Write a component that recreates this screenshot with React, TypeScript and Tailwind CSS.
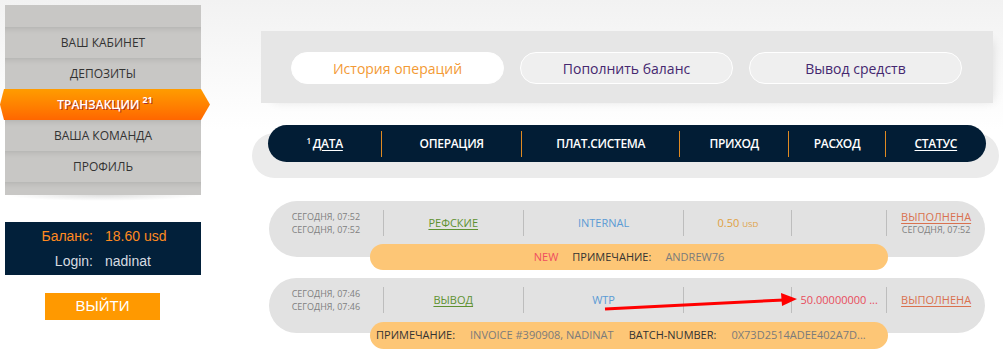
import React from "react";

const menu = [
    { label: "Ваш кабинет" },
    { label: "Депозиты" },
    { label: "Транзакции", active: true, badge: "21" },
    { label: "Ваша команда" },
    { label: "Профиль" },
];

const headCols = [
    { label: "ДАТА", w: "w-[114px]", link: true, sup: "1" },
    { label: "ОПЕРАЦИЯ", w: "w-[140px]" },
    { label: "ПЛАТ.СИСТЕМА", w: "w-[158px]" },
    { label: "ПРИХОД", w: "w-[109px]" },
    { label: "РАСХОД", w: "w-[96px]" },
    { label: "СТАТУС", w: "w-[101px]", link: true },
];

function Divider({ color }: { color: string }) {
    return <div className={`w-px h-[26px] shrink-0 ${color}`} />;
}

function Sidebar() {
    return (
        <div className="w-[210px] shrink-0 flex flex-col pt-[5px] font-['Open_Sans',sans-serif]">
            <div className="ml-[5px] w-[196px] bg-[#c8c7c5] pt-[22px]">
                {menu.map((item) =>
                    item.active ? (
                        <div
                          key={item.label}
                          className="-ml-[5px] w-[210px] h-[31px] flex items-center justify-center bg-gradient-to-b from-[#ff9c00] to-[#ff6600] [clip-path:polygon(4px_0,201px_0,210px_50%,201px_100%,4px_100%,0_50%)] text-white text-[12px] font-semibold uppercase [text-shadow:1px_1px_0_#b0302a]"
                        >
                            {item.label}
                            <span className="relative -top-[5px] ml-[3px] text-[9px] font-bold">{item.badge}</span>
                        </div>
                    ) : (
                        <div
                          key={item.label}
                          className="h-[31px] flex items-center justify-center text-[12px] text-[#333] uppercase shadow-[inset_0_7px_6px_-6px_rgba(0,0,0,0.13)]"
                        >
                            {item.label}
                        </div>
                    )
                )}
                <div className="h-[13px] shadow-[inset_0_7px_6px_-6px_rgba(0,0,0,0.13)]" />
            </div>
            <div className="ml-[5px] w-[196px] h-[6px] bg-[radial-gradient(ellipse_at_top,rgba(0,0,0,0.12),transparent_70%)]" />

            <div className="mt-[21px] ml-[5px] w-[196px] h-[53px] bg-[#02203a] pt-[5px] flex flex-col gap-[7px] font-['Liberation_Sans',Arial,sans-serif] text-[14px]">
                <div className="flex h-[18px] leading-[18px] text-[#ff8a1f]">
                    <span className="w-[88px] text-right">Баланс:</span>
                    <span className="ml-[12px]">18.60 usd</span>
                </div>
                <div className="flex h-[18px] leading-[18px] text-[#d6dbe0]">
                    <span className="w-[88px] text-right">Login:</span>
                    <span className="ml-[12px]">nadinat</span>
                </div>
            </div>

            <div className="mt-[18px] ml-[45px] w-[115px] h-[27px] bg-[#ff9900] text-white text-[15px] flex items-center justify-center font-['Liberation_Sans',Arial,sans-serif]">
                ВЫЙТИ
            </div>
        </div>
    );
}

function DateCell({ time }: { time: string }) {
    return (
        <div className="w-[114px] flex flex-col items-center justify-center text-[9px] leading-[13px] text-[#808080]">
            <span>СЕГОДНЯ, {time}</span>
            <span>СЕГОДНЯ, {time}</span>
        </div>
    );
}

function Row({ time, op, sys, income, outcome, statusTime, h }: {
    time: string; op: string; sys: string; income?: boolean; outcome?: string; statusTime?: boolean; h: string;
}) {
    return (
        <div className={`ml-[17px] w-[716px] ${h} rounded-full bg-[#e2e2e2] pt-[9px]`}>
            <div className="flex h-[26px] items-center">
                <DateCell time={time} />
                <Divider color="bg-[#bdbdbd]" />
                <div className="w-[139px] text-center text-[11px] text-[#5e9130] underline underline-offset-2">{op}</div>
                <Divider color="bg-[#bdbdbd]" />
                <div className="w-[160px] text-center text-[11px] text-[#5b9bd5]">{sys}</div>
                <Divider color="bg-[#bdbdbd]" />
                <div className="w-[107px] text-center text-[11px] text-[#e0a040]">
                    {income && (
                        <>
                            0.50 <span className="text-[8px]">USD</span>
                        </>
                    )}
                </div>
                <Divider color="bg-[#bdbdbd]" />
                <div className="w-[94px] text-center text-[11px] text-[#e84c5c] whitespace-nowrap">{outcome}</div>
                <Divider color="bg-[#bdbdbd]" />
                <div className="w-[98px] flex flex-col items-center">
                    <span className="text-[11px] leading-[14px] text-[#d9714f] underline underline-offset-2">ВЫПОЛНЕНА</span>
                    {statusTime && <span className="text-[9px] leading-[12px] text-[#808080]">СЕГОДНЯ, {time}</span>}
                </div>
            </div>
        </div>
    );
}

function Main() {
    return (
        <div className="ml-[42px] w-[748px] flex flex-col font-['Open_Sans',sans-serif]">
            <div className="mt-[31px] ml-[9px] w-[732px] h-[72px] bg-[#e6e6e6] flex gap-[16px] pl-[30px] pt-[21px] shadow-[6px_4px_10px_-6px_rgba(0,0,0,0.12)]">
                <div className="w-[213px] h-[32px] rounded-full bg-white border border-white flex items-center justify-center text-[14px] text-[#f39a34]">
                    История операций
                </div>
                <div className="w-[213px] h-[32px] rounded-full bg-[#efefef] border border-white flex items-center justify-center text-[14px] text-[#45286f]">
                    Пополнить баланс
                </div>
                <div className="w-[213px] h-[32px] rounded-full bg-[#efefef] border border-white flex items-center justify-center text-[14px] text-[#45286f]">
                    Вывод средств
                </div>
            </div>

            <div className="mt-[30px] w-[747px] h-[45px] rounded-full bg-[#ebebeb]">
                <div className="-mt-[8px] ml-[16px] w-[718px] h-[37px] rounded-[20px] bg-[#021d35] flex items-center text-white text-[12px] font-semibold tracking-tight">
                    {headCols.map((c, i) => (
                        <React.Fragment key={c.label}>
                            {i > 0 && <Divider color="bg-[#e08a22]" />}
                            <div className={`${c.w} text-center`}>
                                {c.sup && <sup className="text-[8px] mr-[2px]">{c.sup}</sup>}
                                <span className={c.link ? "underline underline-offset-2" : ""}>{c.label}</span>
                            </div>
                        </React.Fragment>
                    ))}
                </div>
            </div>

            <div className="mt-[23px]">
                <Row time="07:52" op="РЕФСКИЕ" sys="INTERNAL" income statusTime h="h-[56px]" />
                <div className="relative -mt-[13px] ml-[118px] w-[518px] h-[26px] rounded-full bg-[#fdc676] flex items-center justify-center gap-[14px] text-[11px]">
                    <span className="text-[#ef4d5f]">NEW</span>
                    <span className="text-[#333]">ПРИМЕЧАНИЕ:</span>
                    <span className="text-[#7b7b7b]">ANDREW76</span>
                </div>
            </div>

            <div className="mt-[8px]">
                <Row time="07:46" op="ВЫВОД" sys="WTP" outcome="50.00000000 ..." h="h-[55px]" />
                <div className="relative -mt-[11px] ml-[118px] w-[518px] h-[27px] rounded-full bg-[#fdc676] flex items-center gap-[15px] pl-[6px] text-[11px] whitespace-nowrap overflow-hidden">
                    <span className="text-[#333]">ПРИМЕЧАНИЕ:</span>
                    <span className="text-[#7b7b7b]">INVOICE #390908, NADINAT</span>
                    <span className="text-[#333]">BATCH-NUMBER:</span>
                    <span className="text-[#7b7b7b]">0X73D2514ADEE402A7D...</span>
                </div>
            </div>
        </div>
    );
}

export default function App() {
    return (
        <div className="relative w-[1003px] h-[353px] overflow-hidden flex bg-[linear-gradient(to_bottom,#f2f2f2,#ffffff_130px)]">
            <Sidebar />
            <Main />
            <svg className="absolute left-0 top-0 pointer-events-none" width="1003" height="353">
                <line x1="605" y1="309" x2="784" y2="300" stroke="#ff0000" strokeWidth="3" />
                <polygon points="797,299 781,293 782,306" fill="#ff0000" />
            </svg>
        </div>
    );
}
